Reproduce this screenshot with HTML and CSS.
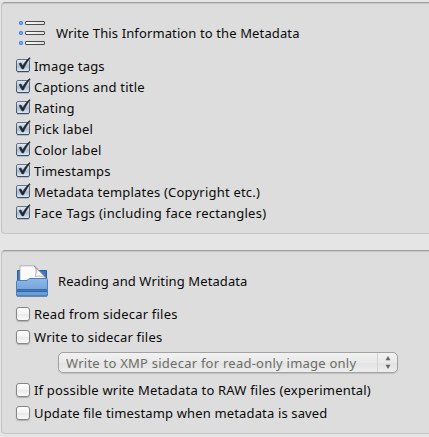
FILE: index.html
```html
<!DOCTYPE html>
<html lang="en">
<head>
<meta charset="utf-8">
<title>Metadata settings</title>
<link rel="stylesheet" href="styles.css">
</head>
<body>
<svg class="defs" width="0" height="0" aria-hidden="true">
  <defs>
    <linearGradient id="on" x2="0" y2="1"><stop offset="0" stop-color="#e4edf8"/><stop offset=".48" stop-color="#b6c6d8"/><stop offset=".55" stop-color="#abbccf"/><stop offset="1" stop-color="#dceefa"/></linearGradient>
    <linearGradient id="edge" x2="0" y2="1"><stop offset="0" stop-color="#64758b"/><stop offset="1" stop-color="#3c4e64"/></linearGradient>
    <linearGradient id="bar" x2="1" y2="0"><stop offset="0" stop-color="#fff"/><stop offset="1" stop-color="#ddd"/></linearGradient>
    <symbol id="check" viewBox="0 0 16 17">
      <rect x="1" y="15" width="12" height="1" fill="#000" opacity=".15"/>
      <rect x=".5" y="2.500" width="13" height="12" rx="1.500" fill="url(#on)" stroke="url(#edge)"/>
      <path d="M3 6.600 5 5.900l1.700 3.200C8.500 5.600 10.900 2.600 13.600.5l.6.8C11.600 4.300 9.300 7.800 7.500 12H6z" fill="#222830" stroke="#222830" stroke-width=".5"/>
    </symbol>
  </defs>
</svg>
<section class="panel">
  <header class="heading">
    <svg class="list-icon" width="27" height="27" viewBox="0 0 27 27">
      <g fill="#8bbcff" stroke="#2f7df2" stroke-width="1.100"><circle cx="3" cy="3" r="1.500"/><circle cx="3" cy="13" r="1.500"/><circle cx="3" cy="23" r="1.500"/></g>
      <g fill="url(#bar)" stroke="#4c4c4c"><rect x="7.500" y="1.500" width="19" height="3" rx=".5"/><rect x="7.500" y="11.500" width="19" height="3" rx=".5"/><rect x="7.500" y="21.500" width="19" height="3" rx=".5"/></g>
    </svg>
    <span class="title">Write This Information to the Metadata</span>
  </header>
  <div class="options">
    <label class="option"><svg class="check"><use href="#check"/></svg><span>Image tags</span></label>
    <label class="option"><svg class="check"><use href="#check"/></svg><span>Captions and title</span></label>
    <label class="option"><svg class="check"><use href="#check"/></svg><span>Rating</span></label>
    <label class="option"><svg class="check"><use href="#check"/></svg><span>Pick label</span></label>
    <label class="option"><svg class="check"><use href="#check"/></svg><span>Color label</span></label>
    <label class="option"><svg class="check"><use href="#check"/></svg><span>Timestamps</span></label>
    <label class="option"><svg class="check"><use href="#check"/></svg><span>Metadata templates (Copyright etc.)</span></label>
    <label class="option"><svg class="check"><use href="#check"/></svg><span class="wide">Face Tags (including face rectangles)</span></label>
  </div>
</section>
<section class="panel sidecar">
  <header class="heading">
    <svg width="32" height="33" viewBox="0 0 32 33">
      <defs>
        <linearGradient id="front" x2="0" y2="1"><stop offset="0" stop-color="#90b8e8"/><stop offset="1" stop-color="#6699d4"/></linearGradient>
        <linearGradient id="curl" x2="1" y2="1"><stop offset="0" stop-color="#aaa"/><stop offset=".5" stop-color="#fff"/><stop offset="1" stop-color="#ddd"/></linearGradient>
      </defs>
      <path d="M1.500 20V5.500h29V20z" fill="#3f78bd" stroke="#295f9f"/>
      <path d="M4 17V3.500V.8h14.500L30 13v4z" fill="#fafafa" stroke="#999" stroke-width=".7"/>
      <path d="M18 .9c2.500 3 2.700 6.500 1 10.500 4-.8 8-.2 11 1.600z" fill="url(#curl)" stroke="#888" stroke-width=".6"/>
      <path d="M.5 16.500q0-1 1-1H11l2.500-2H30.500q1 0 1 1v15.500q0 1-1 1H1.500q-1 0-1-1z" fill="url(#front)" stroke="#4b7ebc"/>
      <path d="M1 24h30v3H1z" fill="#3268aa"/>
      <path d="M1 25.500h30" stroke="#5488c5" stroke-width=".6"/>
      <path d="M1 31.200h30" stroke="#416894" stroke-width=".8"/>
    </svg>
    <span class="title">Reading and Writing Metadata</span>
  </header>
  <div class="options">
    <label class="option"><i class="box"></i><span>Read from sidecar files</span></label>
    <label class="option"><i class="box"></i><span>Write to sidecar files</span></label>
    <div class="select"><span class="value">Write to XMP sidecar for read-only image only</span>
      <span class="arrows"><svg width="6" height="13" viewBox="0 0 6 13"><path d="M3 0l2.500 4.300H.5zM3 13L.5 8.700h5z" fill="#666"/></svg></span>
    </div>
    <label class="option"><i class="box"></i><span>If possible write Metadata to RAW files (experimental)</span></label>
    <label class="option"><i class="box"></i><span class="tight">Update file timestamp when metadata is saved</span></label>
  </div>
</section>
</body>
</html>
```

FILE: styles.css
```css
* { box-sizing: border-box; }
body {
  margin: 0;
  padding: 2px 0 0 1px;
  height: 437px;
  overflow: hidden;
  background: #e5e5e5;
  color: #0a0a0a;
  font: 13px/20px "Noto Sans", sans-serif;
  letter-spacing: 0.2px;
  white-space: nowrap;
}
.defs { position: absolute; }
.panel {
  width: 440px;
  height: 232px;
  padding: 13px 0 0 14px;
  background: #ddd;
  border: 1px solid #c5c5c5;
  border-top-color: #a0a0a0;
  border-radius: 4px;
  box-shadow: inset 0 1px 1px #c5c5c5;
}
.panel.sidecar { height: 184px; margin-top: 16px; }
.heading { display: flex; align-items: center; height: 35px; }
.list-icon { margin-left: 2px; }
.title { margin: -1px 0 0 11px; letter-spacing: 0.12px; }
.sidecar .title { margin-left: 10px; letter-spacing: 0.1px; }
.options { padding-top: 4px; }
.option { display: flex; align-items: center; height: 21px; }
.check { width: 16px; height: 17px; margin: 2px 2px 0 0; align-self: flex-start; flex: none; }
.wide { letter-spacing: 0.28px; }
.tight { letter-spacing: 0.15px; }
.sidecar .options { padding-top: 3px; }
.sidecar .option { height: 23px; }
.box {
  width: 14px;
  height: 14px;
  margin-right: 4px;
  flex: none;
  border: 1px solid #858585;
  border-radius: 3px;
  background: linear-gradient(#fff, #f3f3f3 48%, #e9e9e9 52%, #fafafa);
  box-shadow: 0 1px 1px #0003;
}
.select {
  display: flex;
  align-items: center;
  width: 340px;
  height: 21px;
  margin: 4px 0 5px 42px;
  padding-left: 7px;
  border: 1px solid #a3a3a3;
  border-radius: 5px;
  background: linear-gradient(#f2f2f2, #e9e9e9 50%, #e2e2e2 52%, #eee);
  box-shadow: 0 1px 1px #0002;
  color: #6c6d66;
}
.value { letter-spacing: 0.24px; }
.arrows {
  display: flex;
  align-items: center;
  justify-content: center;
  width: 20px;
  height: 19px;
  margin-left: auto;
  border-left: 1px solid #d2d2d2;
}
```
